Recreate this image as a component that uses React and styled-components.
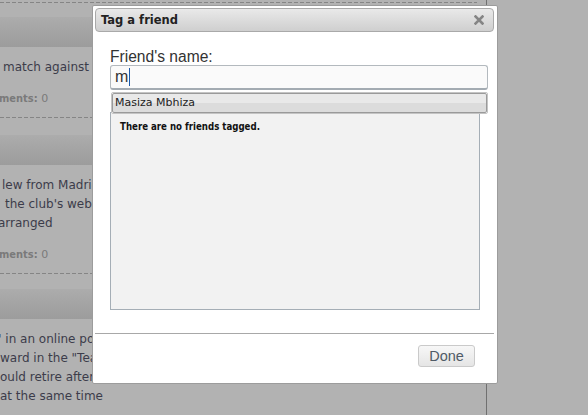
import React from "react";
import styled, { createGlobalStyle } from "styled-components";

const Global = createGlobalStyle`
  html, body { margin: 0; padding: 0; }
  body {
    background: #b2b2b2;
    width: 588px;
    height: 415px;
    overflow: hidden;
    font-family: "DejaVu Sans", Verdana, sans-serif;
  }
`;

const Page = styled.div`
  position: relative;
  width: 588px;
  height: 415px;
  display: flex;
  background: #b2b2b2;
`;

const Column = styled.div`
  width: 477px;
  padding-right: 9px;
  height: 415px;
  border-right: 1px solid #707070;
  overflow: hidden;
  display: flex;
  flex-direction: column;
`;

const Dashed = styled.div`
  height: 1px;
  flex: none;
  margin-top: ${(p) => p.$top}px;
  background-image: repeating-linear-gradient(
    to right,
    #858585 0 4px,
    transparent 4px 6px
  );
`;

const Header = styled.div`
  flex: none;
  height: 30px;
  margin-top: ${(p) => p.$top}px;
  background: linear-gradient(#acacac, #9c9c9c);
`;

const Body = styled.div`
  flex: none;
  margin-top: 11px;
  color: #3c3c4a;
  font-size: 12px;
  line-height: 19px;
  white-space: nowrap;
`;

const Line = styled.div`
  text-indent: ${(p) => p.$indent}px;
  height: 19px;
`;

const Meta = styled.div`
  flex: none;
  margin-top: 12px;
  font-size: 11px;
  line-height: 19px;
  color: #7a7a7a;
  white-space: nowrap;
  text-indent: -1px;
  b {
    font-family: "DejaVu Sans Condensed", "DejaVu Sans", sans-serif;
    font-stretch: condensed;
    font-weight: bold;
  }
`;

const Dialog = styled.div`
  position: absolute;
  left: 92px;
  top: 5px;
  width: 406px;
  height: 379px;
  box-sizing: border-box;
  background: #fff;
  border: 1px solid #9c9c9c;
  border-radius: 2px;
  padding: 2px 3px 0 2px;
  display: flex;
  flex-direction: column;
  z-index: 5;
`;

const TitleBar = styled.div`
  height: 24px;
  box-sizing: border-box;
  border: 1px solid #a9a9a9;
  border-radius: 4px;
  background: linear-gradient(#e9e9e9, #cfcfcf);
  display: flex;
  align-items: center;
  justify-content: space-between;
  padding: 0 9px 0 5px;
`;

const Title = styled.span`
  font-family: "DejaVu Sans", Verdana, sans-serif;
  font-weight: bold;
  font-size: 11.5px;
  color: #222;
`;

const Content = styled.div`
  padding: 16px 0 0 15px;
  display: flex;
  flex-direction: column;
  height: 278px;
  box-sizing: border-box;
`;

const Label = styled.div`
  font-family: "Liberation Sans", Arial, sans-serif;
  font-size: 15.6px;
  line-height: 17px;
  color: #333;
`;

const Field = styled.div`
  position: relative;
  width: 378px;
`;

const Input = styled.div`
  height: 25px;
  box-sizing: border-box;
  border: 1px solid #b3b9be;
  border-bottom: 2px solid #a3abb2;
  border-radius: 3px;
  background: #fafafa;
  padding: 0 4px;
  display: flex;
  align-items: center;
  font-family: "Liberation Sans", Arial, sans-serif;
  font-size: 16px;
  color: #333;
`;

const Caret = styled.span`
  display: inline-block;
  width: 1px;
  height: 18px;
  margin-left: 1px;
  background: #1c5aa8;
`;

const Menu = styled.ul`
  position: absolute;
  left: 1px;
  right: 0;
  top: 27px;
  margin: 0;
  padding: 0;
  list-style: none;
  border: 1px solid #c4c4c4;
  border-radius: 2px;
  background: #fff;
  z-index: 2;
`;

const MenuItem = styled.li`
  height: 20px;
  box-sizing: border-box;
  border: 1px solid #9a9a9a;
  border-radius: 2px;
  background: linear-gradient(#e9e9e9 0 50%, #dcdcdc 50% 100%);
  padding-left: 2px;
  font-size: 11px;
  line-height: 18px;
  color: #222;
`;

const TagBox = styled.div`
  margin-top: 22px;
  width: 370px;
  height: 198px;
  box-sizing: border-box;
  border: 1px solid #a5aeb6;
  background: #f2f2f2;
  padding: 8px 9px;
  font-family: "DejaVu Sans Condensed", "DejaVu Sans", sans-serif;
  font-stretch: condensed;
  font-weight: bold;
  font-size: 9.6px;
  line-height: 12px;
  color: #111;
`;

const ButtonPane = styled.div`
  border-top: 1px solid #a8a8a8;
  margin-top: 23px;
  display: flex;
  justify-content: flex-end;
  padding: 11px 19px 0 0;
`;

const Button = styled.button`
  width: 57px;
  height: 22px;
  box-sizing: border-box;
  border: 1px solid #cacaca;
  border-radius: 3px;
  background: linear-gradient(#f7f7f7, #e5e5e5);
  font-family: "Liberation Sans", Arial, sans-serif;
  font-size: 14.5px;
  color: #505b66;
  padding: 0;
  line-height: 20px;
`;

const CloseIcon = () => (
  <svg width="10" height="10" viewBox="0 0 10 10">
    <path
      d="M1.5 1.5 L8.5 8.5 M8.5 1.5 L1.5 8.5"
      stroke="#858585"
      strokeWidth="2.6"
      strokeLinecap="square"
    />
  </svg>
);

const sections = [
  {
    headerTop: 14,
    lines: [{ t: "match against Barcelona on Saturday", i: 3 }],
    meta: true,
  },
  {
    headerTop: 17,
    lines: [
      { t: "lew from Madrid to London on Monday", i: 2 },
      { t: " the club's website confirmed the deal", i: 5 },
      { t: "arranged", i: -2 },
    ],
    meta: true,
  },
  {
    headerTop: 15,
    lines: [
      { t: '" in an online poll of supporters', i: -4 },
      { t: 'ward in the "Team of the Year"', i: 0 },
      { t: "ould retire after the season ends", i: 0 },
      { t: "at the same time", i: 0 },
    ],
  },
];

export default function App() {
  return (
    <>
      <Global />
      <Page>
        <Column>
          <Dashed $top={2} />
          {sections.map((s, k) => (
            <React.Fragment key={k}>
              <Header $top={s.headerTop} />
              <Body>
                {s.lines.map((l, j) => (
                  <Line key={j} $indent={l.i}>
                    {l.t}
                  </Line>
                ))}
              </Body>
              {s.meta && (
                <>
                  <Meta>
                    <b>ments:</b> 0
                  </Meta>
                  <Dashed $top={9} />
                </>
              )}
            </React.Fragment>
          ))}
        </Column>
        <Dialog>
          <TitleBar>
            <Title>Tag a friend</Title>
            <CloseIcon />
          </TitleBar>
          <Content>
            <Label>Friend's name:</Label>
            <Field>
              <Input>
                m<Caret />
              </Input>
              <Menu>
                <MenuItem>Masiza Mbhiza</MenuItem>
              </Menu>
            </Field>
            <TagBox>There are no friends tagged.</TagBox>
          </Content>
          <ButtonPane>
            <Button>Done</Button>
          </ButtonPane>
        </Dialog>
      </Page>
    </>
  );
}
